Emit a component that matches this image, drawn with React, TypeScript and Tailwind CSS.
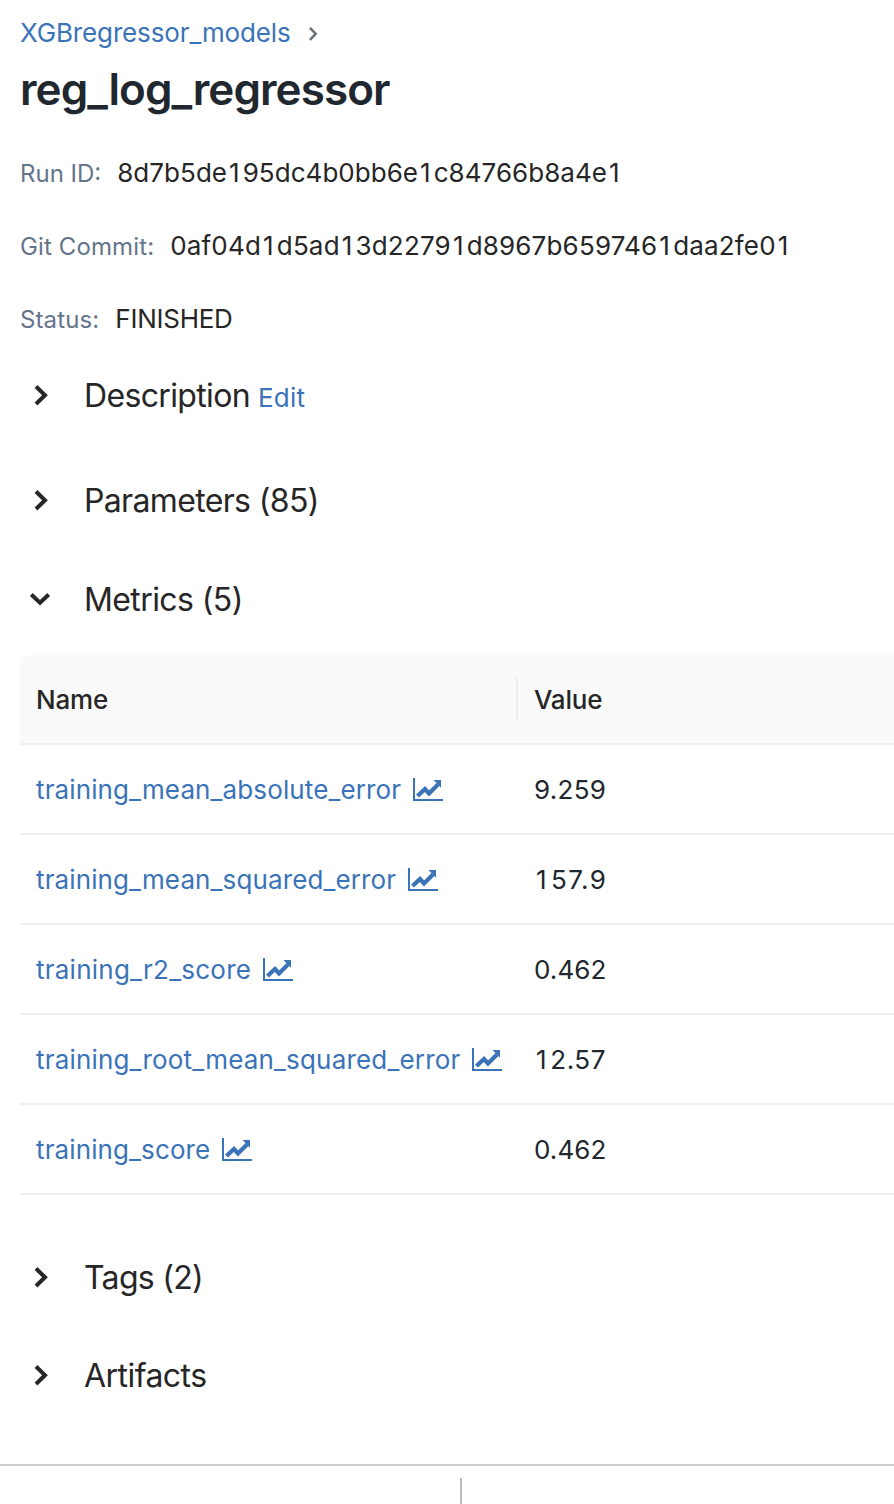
import React from "react";

const Chevron = ({ down = false }: { down?: boolean }) => (
  <svg className="h-6 w-6 shrink-0" viewBox="0 0 24 24" fill="none" stroke="#262626" strokeWidth="4">
    <path d={down ? "M3.3 7.5L12 15.7L20.7 7.5" : "M8 3.5L17 12.2L8 21"} />
  </svg>
);

const ChartIcon = () => (
  <svg className="ml-[11px] h-6 w-[31px] shrink-0" viewBox="0 0 31 24" fill="none" stroke="#3a73b8">
    <path d="M2 1V23H31" strokeWidth="2" />
    <path d="M5.5 19L13 12L17 16.5L26 7.5" strokeWidth="4.2" />
    <path d="M21.5 3H29V10.8Z" fill="#3a73b8" stroke="none" />
  </svg>
);

// Gives the narrow digit 1 the same advance as the other digits.
const Figures = ({ text }: { text: string }) => (
  <>
    {text.split(/(1)/).map((part, i) =>
      part === "1" ? <span key={i} className="pr-[3px] pl-[2px]">1</span> : part,
    )}
  </>
);

type SectionProps = { label: string; tracking: string; height: string; down?: boolean; action?: string };

const Section = ({ label, tracking, height, down, action }: SectionProps) => (
  <section className={`flex shrink-0 items-center pl-7 text-[#262626] ${height}`}>
    <Chevron down={down} />
    <h2 className={`ml-8 pt-0.5 text-[32px] leading-10 ${tracking}`}>{label}</h2>
    {action && <a className="ml-2 pt-[5px] text-[26px] leading-9 tracking-[0.2px] text-[#3a73b8]">{action}</a>}
  </section>
);

const details = [
  { label: "Run ID:", value: "8d7b5de195dc4b0bb6e1c84766b8a4e1", labelTracking: "tracking-[0px]", tracking: "tracking-[0.04px]" },
  { label: "Git Commit:", value: "0af04d1d5ad13d22791d8967b6597461daa2fe01", labelTracking: "tracking-[0.12px]", tracking: "tracking-[0.18px]" },
  { label: "Status:", value: "FINISHED", labelTracking: "tracking-[0.12px]", tracking: "tracking-[-0.25px]" },
];

const metrics = [
  { name: "training_mean_absolute_error", value: "9.259", tracking: "tracking-[0.12px]", valueTracking: "tracking-[0.3px]" },
  { name: "training_mean_squared_error", value: "157.9", tracking: "tracking-[0.12px]", valueTracking: "tracking-[1.4px]" },
  { name: "training_r2_score", value: "0.462", tracking: "tracking-[0.24px]", valueTracking: "tracking-[0.1px]" },
  { name: "training_root_mean_squared_error", value: "12.57", tracking: "tracking-[0.18px]", valueTracking: "tracking-[0.6px]" },
  { name: "training_score", value: "0.462", tracking: "tracking-[0.12px]", valueTracking: "tracking-[0.1px]" },
];

export default function App() {
  return (
    <main className="flex h-[1504px] w-full flex-col overflow-hidden bg-white font-['Inter',sans-serif] text-[26px] text-[#262626]">
      <nav className="flex h-[66px] shrink-0 items-center pl-5">
        <a className="pb-px tracking-[-0.14px] text-[#3a73b8]">XGBregressor_models</a>
        <svg className="ml-[17px] h-4 w-3" viewBox="0 0 12 16" fill="none" stroke="#66727f" strokeWidth="2.6">
          <path d="M2 2.8L7.7 8.8L2 14.8" />
        </svg>
      </nav>
      <h1 className="h-12 shrink-0 pl-5 text-[44px] leading-[47px] font-semibold tracking-[-0.92px] text-[#20272e]">reg_log_regressor</h1>
      <dl className="mt-[22px] shrink-0">
        {details.map((d) => (
          <div key={d.label} className="flex h-[73px] items-center gap-4 pl-5">
            <dt className={`pt-0.5 text-2xl text-[#64748a] ${d.labelTracking}`}>{d.label}</dt>
            <dd className={d.tracking}><Figures text={d.value} /></dd>
          </div>
        ))}
      </dl>
      <div className="h-5 shrink-0" />
      <Section label="Description" tracking="tracking-[-0.65px]" height="h-10" action="Edit" />
      <div className="h-16 shrink-0" />
      <Section label="Parameters (85)" tracking="tracking-[-0.65px]" height="h-[42px]" />
      <div className="h-[57px] shrink-0" />
      <Section label="Metrics (5)" tracking="tracking-[-0.6px]" height="h-[42px]" down />
      <div className="mt-[35px] ml-5 shrink-0">
        <div className="flex h-[90px] items-center rounded-tl-lg border-b-2 border-[#f0f0f0] bg-[#fafafa] font-medium tracking-[-0.2px]">
          <div className="flex h-[42px] w-[498px] items-center border-r-2 border-[#ececec] pl-4">Name</div>
          <div className="pl-4">Value</div>
        </div>
        {metrics.map((m) => (
          <div key={m.name} className="flex h-[90px] items-center border-b-2 border-[#f0f0f0]">
            <div className="flex w-[498px] items-center pl-4 text-[#3a73b8]">
              <a className={m.tracking}>{m.name}</a>
              <ChartIcon />
            </div>
            <div className={`pl-4 text-[#20272e] ${m.valueTracking}`}><Figures text={m.value} /></div>
          </div>
        ))}
      </div>
      <div className="h-[61px] shrink-0" />
      <Section label="Tags (2)" tracking="tracking-[-0.7px]" height="h-[42px]" />
      <div className="h-14 shrink-0" />
      <Section label="Artifacts" tracking="tracking-[-0.55px]" height="h-[42px]" />
      <footer className="mt-auto h-10 shrink-0 border-t-2 border-[#ccc] pt-3 pl-[460px]">
        <div className="h-full w-0.5 bg-[#bbb]" />
      </footer>
    </main>
  );
}
